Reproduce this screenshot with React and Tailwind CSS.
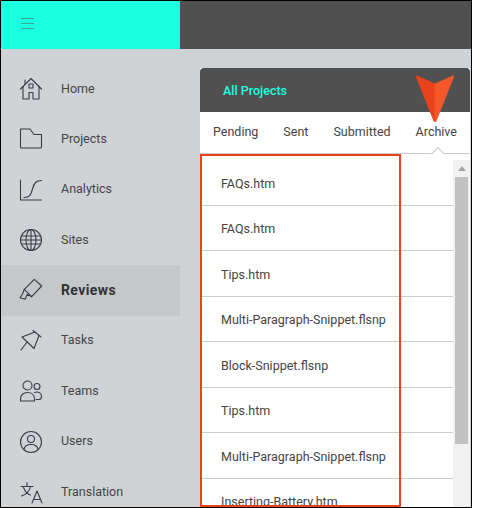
import React from 'react';

const Icon = ({ children }) => (
  <svg width="24" height="24" viewBox="0 0 24 24" fill="none" stroke="#3b3b45" strokeWidth="1.1" strokeLinecap="round" strokeLinejoin="round" className="shrink-0">
    {children}
  </svg>
);

const HomeIcon = () => (
  <Icon>
    <path d="M1.500 12 12 1.500 22.500 12" />
    <path d="M4 9.500V22h6v-6.500h4V22h6V9.500" />
    <path d="M6 3v3.500" />
    <rect x="10" y="7" width="4" height="4" />
  </Icon>
);

const FolderIcon = () => (
  <Icon>
    <path d="M1.500 2h9.500l4 5.500h7.500V20a1 1 0 0 1-1 1H2.500a1 1 0 0 1-1-1V2Z" />
  </Icon>
);

const AnalyticsIcon = () => (
  <Icon>
    <path d="M1.500 2v20h21" />
    <path d="M5 19.500c6 0 7-3 8.500-8.500C15 5 17 2.500 22.500 2.500" />
  </Icon>
);

const GlobeIcon = () => (
  <Icon>
    <circle cx="12" cy="12" r="10.500" />
    <ellipse cx="12" cy="12" rx="5" ry="10.500" />
    <path d="M12 1.500v21M2.500 8h19M2.500 16h19M1.500 12h21" />
  </Icon>
);

const ReviewIcon = () => (
  <Icon>
    <path d="M15.300 1.300 22.700 8l-10 10.700-7.400-7.400 10-10Z" />
    <path d="M5.300 11.300 3.700 15.700 1 19.700l5 1.600 2.300-5 4.400 2.400" />
  </Icon>
);

const PinIcon = () => (
  <Icon>
    <path d="M14 1.500 22 8" />
    <path d="M16 3 3 8l12 11.500L20 6.500" />
    <path d="M8 13 2 21" />
  </Icon>
);

const TeamIcon = () => (
  <Icon>
    <circle cx="8.500" cy="6.500" r="4.500" />
    <circle cx="18" cy="7.500" r="3" />
    <path d="M1.500 22v-2c0-4 3-6.500 7-6.500s7 2.500 7 6.500v2H1.500Z" />
    <path d="M15.500 13.500c4-1.500 7 .5 7 4 0 2-1 3-2.500 3h-3" />
  </Icon>
);

const UserIcon = () => (
  <Icon>
    <circle cx="12" cy="12" r="10.500" />
    <circle cx="12" cy="9" r="3.500" />
    <path d="M5 19.500c.5-3.500 3.500-5 7-5s6.500 1.500 7 5" />
  </Icon>
);

const TranslateIcon = () => (
  <Icon>
    <path d="M2 6.500h12M8 2.500v4M11.500 6.500C10.500 11 7 14.500 2.500 16M4.500 7.500c1.500 4 4 6.500 7 7.500" />
    <path d="m13 23 5-12 5 12M14.500 19.500h7" />
  </Icon>
);

const navItems = [
  { label: 'Home', icon: HomeIcon },
  { label: 'Projects', icon: FolderIcon },
  { label: 'Analytics', icon: AnalyticsIcon },
  { label: 'Sites', icon: GlobeIcon },
  { label: 'Reviews', icon: ReviewIcon, active: true },
  { label: 'Tasks', icon: PinIcon },
  { label: 'Teams', icon: TeamIcon },
  { label: 'Users', icon: UserIcon },
  { label: 'Translation', icon: TranslateIcon },
];

const tabs = ['Pending', 'Sent', 'Submitted', 'Archive'];

const files = [
  'FAQs.htm',
  'FAQs.htm',
  'Tips.htm',
  'Multi-Paragraph-Snippet.flsnp',
  'Block-Snippet.flsnp',
  'Tips.htm',
  'Multi-Paragraph-Snippet.flsnp',
  'Inserting-Battery.htm',
];

export default function App() {
  return (
    <div className="relative flex h-[508px] w-[472px] flex-col overflow-hidden border border-black bg-[#d0d3d6] font-['Roboto',sans-serif] text-[12.500px] text-[#444]">
      <header className="flex h-[48px] shrink-0 bg-[#505050]">
        <div className="flex w-[179px] items-center bg-[#1affdf] pb-[3px] pl-[20px]">
          <div className="flex w-[13px] flex-col gap-[4px]">
            <span className="h-px bg-[#35a996]" />
            <span className="h-px bg-[#35a996]" />
            <span className="h-px bg-[#35a996]" />
          </div>
        </div>
      </header>

      <div className="flex min-h-0 flex-1">
        <nav className="w-[179px] shrink-0 pt-[14.700px]">
          {navItems.map(({ label, icon: NavIcon, active }) => (
            <div
              key={label}
              className={`flex h-[50.400px] items-center gap-[18px] pl-[18px] ${active ? 'bg-[#c5c8ca]' : ''}`}
            >
              <NavIcon />
              <span className={active ? 'text-[14px] font-bold tracking-[0.4px] text-[#333]' : ''}>{label}</span>
            </div>
          ))}
        </nav>

        <main className="mt-[19px] mr-px ml-[20px] flex min-w-0 flex-1 flex-col bg-white">
          <div className="flex h-[44px] shrink-0 items-center rounded-t-sm bg-[#505050] pt-[2px] pl-[23px] font-medium text-[#1affdf]">
            All Projects
          </div>
          <div className="relative flex h-[42px] shrink-0 items-center gap-[25px] border-b border-[#ccc] pl-[13px]">
            {tabs.map((tab) => (
              <span key={tab}>{tab}</span>
            ))}
            <span className="absolute top-[37px] left-[233px] h-[10px] w-[10px] rotate-45 border-t border-l border-[#ccc] bg-white" />
          </div>
          <div className="flex min-h-0 flex-1 pt-[6px]">
            <ul className="min-w-0 flex-1 overflow-hidden pl-px">
              {files.map((file, i) => (
                <li key={i} className="flex h-[45.500px] items-center border-b border-[#ccc] pt-[4px] pl-[20px]">
                  {file}
                </li>
              ))}
            </ul>
            <div className="flex w-[17px] shrink-0 flex-col items-center bg-[#f1f1f1]">
              <span className="mt-[6px] h-0 w-0 border-x-[4px] border-b-[5px] border-x-transparent border-b-[#a3a3a3]" />
              <span className="mt-[6px] h-[267px] w-[13px] bg-[#c1c1c1]" />
            </div>
          </div>
        </main>
      </div>

      {/* annotation overlays */}
      <div className="pointer-events-none absolute top-[153px] bottom-0 left-[199px] w-[201px] border-2 border-[#e8431f]" />
      <svg width="44" height="52" viewBox="0 0 44 52" className="pointer-events-none absolute top-[73px] left-[413px]">
        <path d="M3 2 21 10V48L20 47 2.500 3Q2 1.500 3 2Z" fill="#e8431a" stroke="#e8431a" strokeWidth="1" strokeLinejoin="round" />
        <path d="M39 2 21 10V48L22 47 39.500 3Q40 1.500 39 2Z" fill="#f4572a" stroke="#f4572a" strokeWidth="1" strokeLinejoin="round" />
      </svg>
    </div>
  );
}
